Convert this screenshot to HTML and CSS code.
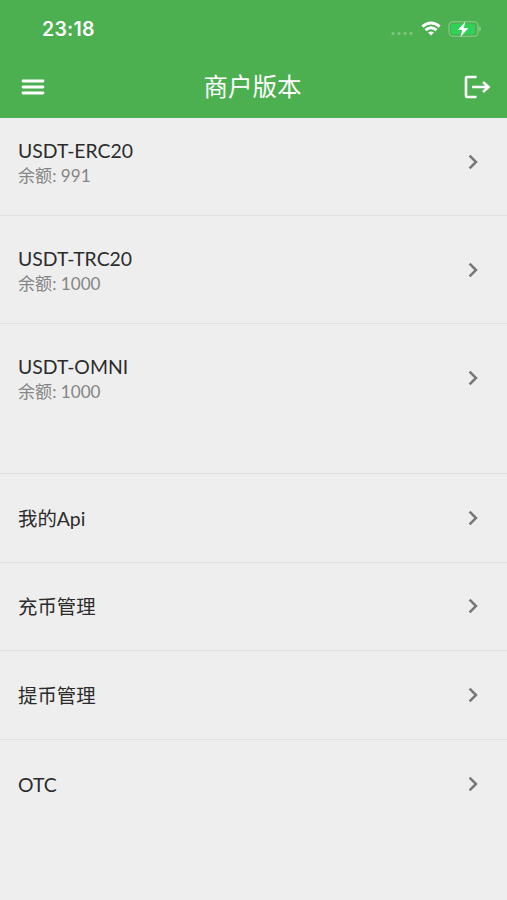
FILE: index.html
```html
<!DOCTYPE html>
<html lang="zh-CN">
<head>
<meta charset="utf-8">
<meta name="viewport" content="width=device-width, initial-scale=1">
<title>商户版本</title>
<link rel="stylesheet" href="styles.css">
</head>
<body>
<svg width="0" height="0" class="defs"><symbol id="chevron" viewBox="0 0 10 16"><path d="M1.6 1.6 8 8l-6.4 6.4" fill="none" stroke="currentColor" stroke-width="2.5"/></symbol></svg>
<header class="header">
  <div class="status">
    <span class="time">23:18</span>
    <div class="indicators">
      <svg class="dots" width="24" height="5" viewBox="0 0 24 5"><g fill="currentColor"><circle cx="3" cy="2.5" r="1.7"/><circle cx="9" cy="2.5" r="1.7"/><circle cx="15" cy="2.5" r="1.7"/><circle cx="21" cy="2.5" r="1.7"/></g></svg>
      <svg class="wifi" width="20" height="15" viewBox="0 0 20 15"><g fill="none" stroke="#fff" stroke-width="2.9"><path d="M1.3 5.6Q10-1.8 18.7 5.6"/><path d="M4.5 9.2Q10 4.5 15.5 9.2"/></g><path d="M7 11.6Q10 9.2 13 11.6L10 14.6Z" fill="#fff"/></svg>
      <svg class="battery" width="34" height="18" viewBox="0 0 34 18"><rect x="1" y="1.8" width="29" height="14.4" rx="4" fill="none" stroke="#8bce8e" stroke-width="1.1"/><rect x="3" y="3.8" width="24" height="10.4" rx="2.2" fill="#30d158"/><path d="M31.2 6.5q1.8.8 1.8 2.5t-1.8 2.5Z" fill="#8bce8e"/><path d="M17.4 1.4 9.8 9.9h4.4l-1.7 7.1L20.4 8h-4.7Z" fill="#fff"/></svg>
    </div>
  </div>
  <div class="toolbar">
    <svg width="24" height="18" viewBox="0 0 24 18"><path d="M2 3h20M2 9h20M2 15h20" stroke="#fff" stroke-width="2.8" stroke-linecap="round"/></svg>
    <h1 class="title">商户版本</h1>
    <svg width="28" height="26" viewBox="0 0 28 26"><path d="M13.5 3H4Q3 3 3 4v18q0 1 1 1h9.5M9 13h15.5M20 8l5.5 5-5.5 5" fill="none" stroke="#fff" stroke-width="2.6"/></svg>
  </div>
</header>
<main>
  <section class="balances">
    <div class="row first"><div><div class="name">USDT-ERC20</div><div class="balance">余额: 991</div></div><svg class="chevron"><use href="#chevron"/></svg></div>
    <div class="row"><div class="label"><div class="name">USDT-TRC20</div><div class="balance">余额: 1000</div></div><svg class="chevron"><use href="#chevron"/></svg></div>
    <div class="row last"><div><div class="name">USDT-OMNI</div><div class="balance">余额: 1000</div></div><svg class="chevron"><use href="#chevron"/></svg></div>
  </section>
  <nav class="links">
    <div class="row"><div class="name">我的Api</div><svg class="chevron"><use href="#chevron"/></svg></div>
    <div class="row"><div class="name">充币管理</div><svg class="chevron"><use href="#chevron"/></svg></div>
    <div class="row"><div class="name">提币管理</div><svg class="chevron"><use href="#chevron"/></svg></div>
    <div class="row"><div class="name">OTC</div><svg class="chevron"><use href="#chevron"/></svg></div>
  </nav>
</main>
</body>
</html>
```
FILE: styles.css
```css
* { box-sizing: border-box; }
body {
  margin: 0;
  min-height: 900px;
  background: #eee;
  color: #2b2b2b;
  font-family: Lato, "Noto Sans CJK SC", sans-serif;
}
svg { display: block; flex: none; }
.defs { height: 0; }
.header { height: 118px; background: #4caf50; color: #fff; }
.status {
  height: 57px;
  padding: 0 25px 0 42px;
  display: flex;
  align-items: center;
  justify-content: space-between;
}
.time { font: 600 19.5px/24px Inter, sans-serif; letter-spacing: .25px; }
.indicators { display: flex; align-items: center; }
.dots { margin-top: 10px; color: #7bc47e; }
.wifi { margin-left: 7px; }
.battery { margin-left: 7px; }
.toolbar {
  height: 59px;
  padding: 0 16px 0 21px;
  display: grid;
  grid-template-columns: 28px 1fr 28px;
  align-items: center;
}
.title {
  margin: 0;
  padding-right: 7px;
  font-size: 24.5px;
  line-height: 36px;
  font-weight: 400;
  text-align: center;
}
.row {
  height: 108px;
  padding: 0 29px 0 18px;
  border-bottom: 1px solid #e1e1e1;
  display: flex;
  align-items: center;
  justify-content: space-between;
}
.first { height: 98px; padding-bottom: 9px; }
.last { height: 150px; padding-bottom: 41px; }
.label { padding-top: 1px; }
.links .row { height: 88.5px; }
.links .row:last-child { border-bottom: 0; }
.links .name { padding-top: 1px; }
.name { font-size: 19.4px; line-height: 27px; }
.balance { font-size: 17.1px; line-height: 24px; color: #858585; }
.chevron { width: 10px; height: 16px; color: #777; }
```
